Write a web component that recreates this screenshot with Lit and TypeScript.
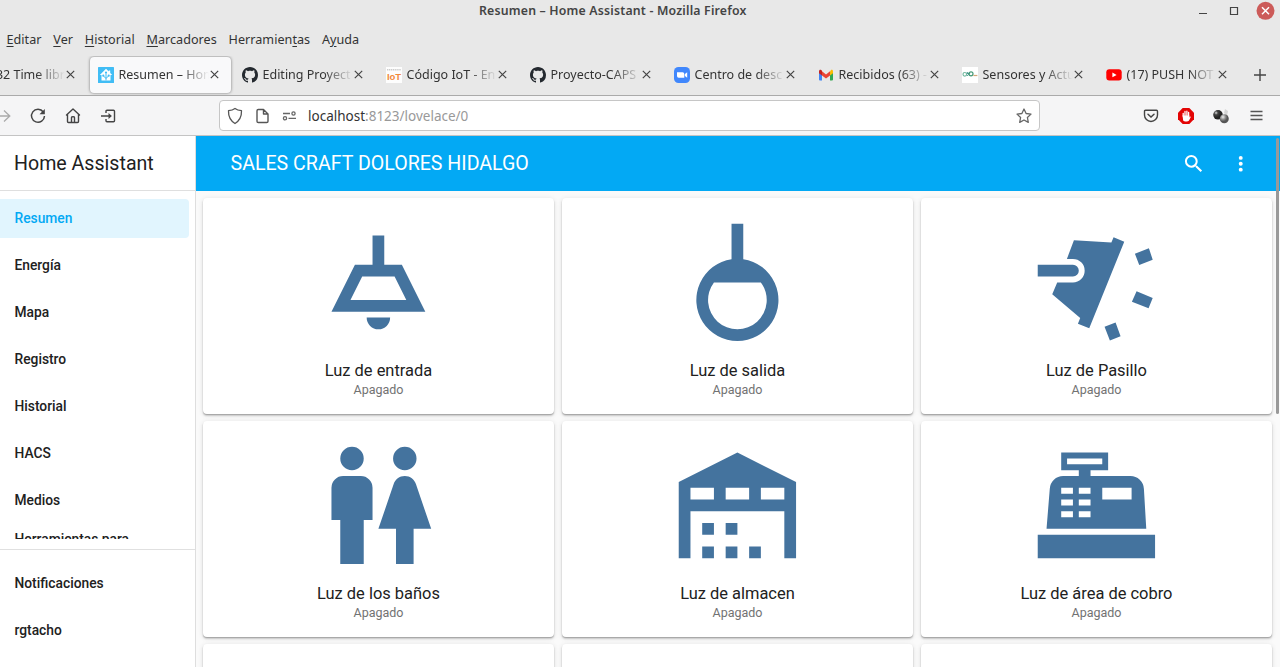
import { LitElement, html, css, svg } from "lit";
import { customElement } from "lit/decorators.js";
import { classMap } from "lit/directives/class-map.js";

const githubIcon = svg`<svg viewBox="0 0 16 16" width="16" height="16"><path fill="#24292f" d="M8 0C3.58 0 0 3.58 0 8c0 3.54 2.29 6.53 5.47 7.59.4.07.55-.17.55-.38 0-.19-.01-.82-.01-1.49-2.01.37-2.53-.49-2.69-.94-.09-.23-.48-.94-.82-1.13-.28-.15-.68-.52-.01-.53.63-.01 1.08.58 1.23.82.72 1.21 1.87.87 2.33.66.07-.52.28-.87.51-1.07-1.78-.2-3.64-.89-3.64-3.95 0-.87.31-1.59.82-2.15-.08-.2-.36-1.02.08-2.12 0 0 .67-.21 2.2.82.64-.18 1.32-.27 2-.27s1.36.09 2 .27c1.53-1.04 2.2-.82 2.2-.82.44 1.1.16 1.92.08 2.12.51.56.82 1.27.82 2.15 0 3.07-1.87 3.75-3.65 3.95.29.25.54.73.54 1.48 0 1.07-.01 1.93-.01 2.2 0 .21.15.46.55.38A8.01 8.01 0 0 0 16 8c0-4.42-3.58-8-8-8z"/></svg>`;

const homeAssistantIcon = svg`<svg viewBox="0 0 16 16" width="16" height="16"><rect width="16" height="16" rx=".6" fill="#41bdf5"/><path fill="#fff" d="M8 1.8 1.8 8h1.7v5.4h9V8h1.7l-2-2V3.6h-1.4v1Z"/><path d="M8 13.4V6.2M8 11.4 5.3 8.9M8 11.4l2.7-2.5" stroke="#41bdf5" fill="none"/><g fill="#41bdf5"><circle cx="8" cy="5.5" r="1.1"/><circle cx="5.3" cy="8.7" r="1.1"/><circle cx="10.7" cy="8.7" r="1.1"/></g></svg>`;

const iotIcon = svg`<svg viewBox="0 0 16 16" width="16" height="16"><rect width="16" height="16" fill="#fdfdfd"/><path d="M1 2.7h14" stroke="#ccc" stroke-width="1.6" stroke-dasharray="1.3 .6"/><text x="1" y="13.2" font-family="Liberation Sans" font-size="9.5" font-weight="700" fill="#f28a3c" textLength="14">IoT</text></svg>`;

const zoomIcon = svg`<svg viewBox="0 0 16 16" width="16" height="16"><rect width="16" height="16" rx="4.5" fill="#4087fc"/><path fill="#fff" d="M3 5.2h5.6a1.7 1.7 0 0 1 1.7 1.7v3.9H4.7A1.7 1.7 0 0 1 3 9.1ZM10.9 7l2.3-1.7v5.4L10.9 9Z"/></svg>`;

const gmailIcon = svg`<svg viewBox="0 0 16 16" width="16" height="16"><path fill="#4285f4" d="M1 4h3v9.5H2a1 1 0 0 1-1-1Z"/><path fill="#34a853" d="M12 6h3v6.5a1 1 0 0 1-1 1h-2Z"/><path fill="#fbbc04" d="M12 4.5 13 3c1-.6 2 .1 2 1.2v2L12 8.500Z"/><path fill="#ea4335" d="M4 4.3 8 7.400l4-3.100v4.200L8 11.500 4 8.500Z"/><path fill="#c5221f" d="M1 4.200C1 3 2.200 2.300 3.200 3L4 3.700v4.800L1 6.200Z"/></svg>`;

const sensorIcon = svg`<svg viewBox="0 0 16 16" width="16" height="16"><rect width="16" height="16" fill="#fff"/><g fill="none" stroke-width="1.200"><circle cx="2.800" cy="7.300" r="1.800" stroke="#73b9a0"/><path d="M5 5.500 8 8.500M8 5.500 5 8.500" stroke="#328a83"/><circle cx="9" cy="6.800" r="2" stroke="#479a77"/><path d="M11.400 8.500h4" stroke="#d2a779"/></g></svg>`;

const youtubeIcon = svg`<svg viewBox="0 0 16 16" width="16" height="16"><rect x=".3" y="2.300" width="15.400" height="11.200" rx="3" fill="#f00"/><path fill="#fff" d="m6.400 5.500 4.200 2.400-4.200 2.400Z"/></svg>`;

interface Tab { title: string; icon?: unknown; active?: boolean; }
const TABS: Tab[] = [
  { title: "ESP32 Time libr" },
  { title: "Resumen – Hom", icon: homeAssistantIcon, active: true },
  { title: "Editing Proyect", icon: githubIcon },
  { title: "Código IoT - En", icon: iotIcon },
  { title: "Proyecto-CAPS", icon: githubIcon },
  { title: "Centro de desc", icon: zoomIcon },
  { title: "Recibidos (63) -", icon: gmailIcon },
  { title: "Sensores y Actu", icon: sensorIcon },
  { title: "(17) PUSH NOT", icon: youtubeIcon },
];

interface Light { name: string; path: string; }
const LIGHTS: Light[] = [
  { name: "Luz de entrada", path: "M8 9H11V4H13V9H16L20 17H4ZM14 18A2 2 0 0 1 10 18ZM9.240 11 7.240 15H16.760L14.760 11Z" },
  { name: "Luz de salida", path: "M11 2V8.070A7 7 0 1 0 13 8.070V2ZM8 12H16A5 5 0 1 1 8 12Z" },
  { name: "Luz de Pasillo", path: "M2 9H8A1 1 0 0 1 8 11H2ZM8.170 4.830 14.550 5.200 14.930 4.300 16.750 5.060 10.780 19.800 8.850 19.030 9.240 18.070 4.470 14.030 5.320 12H8A2 2 0 0 0 8 8H6.970ZM18.560 7.100 20.950 6.200 21.600 8.130 19.300 9.030ZM18.850 13.520 21.600 14.660 20.890 16.420 18.050 15.300ZM13.390 19.550 15.270 18.820 16.120 21.200 14.300 21.900Z" },
  { name: "Luz de los baños", path: "M7.500 2A2 2 0 0 1 7.500 6A2 2 0 0 1 7.500 2M6 7H9A2 2 0 0 1 11 9V14.500H9.500V22H5.500V14.500H4V9A2 2 0 0 1 6 7M16.500 2A2 2 0 0 1 16.500 6A2 2 0 0 1 16.500 2M15 22V16H12L14.590 8.410C14.840 7.590 15.600 7 16.500 7S18.160 7.590 18.410 8.410L21 16H18V22Z" },
  { name: "Luz de almacen", path: "M2 8 12 3 22 8V21H20V13H4V21H2ZM4 9V11H8V9ZM10 9V11H14V9ZM16 9V11H20V9ZM6 15H8V17H6ZM10 15H12V17H10ZM6 19H8V21H6ZM10 19H12V21H10ZM14 19H16V21H14Z" },
  { name: "Luz de área de cobro", path: "M2 17H22V21H2ZM6 3H14V6H11V7H17.800A2.300 2.300 0 0 1 20.100 9.200L20.500 16H3.500L4.050 9.200A2.300 2.300 0 0 1 6.350 7H9V6H6ZM7 4V5H13V4ZM6 9V10H8V9ZM9 9V10H11V9ZM6 11V12H8V11ZM9 11V12H11V11ZM6 13V14H8V13ZM9 13V14H11V13ZM13 9V11H18V9Z" },
];

@customElement("browser-chrome")
class BrowserChrome extends LitElement {
  static styles = css`
    :host { display: block; height: 136px; box-sizing: border-box; background: #e8e8e8; color: #333; font: 12.500px/20px "Noto Sans", "Open Sans", sans-serif; border-bottom: 1px solid #c4c4c4; }
    * { box-sizing: border-box; }
    svg { display: block; flex: none; }
    .titlebar { height: 24px; display: grid; grid-template-columns: 479px 1fr auto; align-items: center; padding-bottom: 2px; }
    .title { padding-top: .5px; font-size: 12.300px; font-weight: 600; letter-spacing: .19px; color: #444; }
    .menu { display: flex; height: 32px; align-items: center; gap: 11.800px; padding: 0 0 1px 6.500px; font-size: 12.600px; letter-spacing: .03px; }
    .menu u { text-decoration-thickness: 1px; text-underline-offset: 2px; }
    .tabs { display: flex; height: 39px; align-items: center; padding-bottom: 2px; overflow: hidden; }
    .tab { flex: none; width: 141px; height: 36px; margin: 0 1px 0 2px; display: flex; align-items: center; gap: 5px; padding: 0 9px 0 8px; border-radius: 4px; }
    .tab:first-child { margin-left: -54.500px; }
    .tab.active { background: #f9f9fa; box-shadow: 0 0 3px rgba(0,0,0,.5); }
    .label { flex: 1; margin-right: -4px; overflow: hidden; white-space: nowrap; -webkit-mask-image: linear-gradient(to right, #000 68%, transparent); mask-image: linear-gradient(to right, #000 68%, transparent); }
    .close { margin-right: 3px; }
    .add { margin-left: 14.500px; }
    .toolbar { height: 40px; background: #f5f5f6; border-top: 1px solid #aaa; display: flex; align-items: center; }
    .nav { flex: none; width: 218px; display: flex; align-items: center; gap: 18px; margin-left: -6px; }
    .address { width: 821px; height: 31px; margin-left: 7px; background: #fff; border: 1px solid #c6c6c6; border-radius: 4px; display: flex; align-items: center; padding: 0 7px; font-size: 13.500px; color: #999; }
    .icons { display: flex; gap: 11px; margin-right: 11px; }
    .url { flex: 1; }
    .url b { font-weight: 400; color: #333; }
    .actions { display: flex; align-items: center; gap: 19px; margin-left: 103px; }
    .hamburger { margin-left: 2px; }
  `;

  render() {
    const close = svg`<svg class="close" width="9" height="9" viewBox="0 0 9 9"><path d="m.8.8 7.400 7.400m0-7.400-7.400 7.400" stroke="#444" stroke-width="1.200"/></svg>`;
    return html`
      <div class="titlebar"><span></span><span class="title">Resumen – Home Assistant - Mozilla Firefox</span>
        <svg width="84" height="22" viewBox="1196 0 84 22"><path d="M1199 13.500h8" stroke="#444"/><path d="M1230.500 7.500h7v7h-7Z" fill="none" stroke="#444" stroke-width="1.200"/><circle cx="1265.500" cy="10.800" r="9" fill="#cc5b59"/><path d="m1262 7.300 7 7m0-7-7 7" stroke="#fff" stroke-width="1.500"/></svg></div>
      <div class="menu"><span><u>E</u>ditar</span><span><u>V</u>er</span><span><u>H</u>istorial</span><span><u>M</u>arcadores</span><span>Herramien<u>t</u>as</span><span>A<u>y</u>uda</span></div>
      <div class="tabs">
        ${TABS.map(t => html`<div class=${classMap({ tab: true, active: !!t.active })}>${t.icon ?? svg`<svg width="16" height="16"></svg>`}<span class="label">${t.title}</span>${close}</div>`)}
        <svg class="add" width="12" height="12" viewBox="0 0 12 12"><path d="M6 0v12M0 6h12" stroke="#444" stroke-width="1.400"/></svg>
      </div>
      <div class="toolbar">
        <div class="nav">
          <svg width="17" height="16" viewBox="0 0 17 16"><path d="M1 8h15M10 2.500 15.800 8 10 13.500" fill="none" stroke="#aaa" stroke-width="1.300"/></svg>
          <svg width="18" height="18" viewBox="0 0 18 18"><path d="M14.300 5A6.500 6.500 0 1 0 15.500 9" fill="none" stroke="#444" stroke-width="1.500"/><path d="M15.800 2v5.300h-5.300Z" fill="#444"/></svg>
          <svg width="17" height="17" viewBox="0 0 17 17"><path d="m1.500 8 6.500-6 6.500 6M2.500 7.500v7c0 .6.400 1 1 1h9c.6 0 1-.4 1-1v-7M6.500 15v-4.500c0-1 3-1 3 0V15" fill="none" stroke="#444" stroke-width="1.400" stroke-linejoin="round" stroke-linecap="round"/></svg>
          <svg width="17" height="16" viewBox="0 0 17 16"><path d="M6 5V3.300c0-.6.400-1 1-1h6.500c.6 0 1 .4 1 1v9.400c0 .6-.4 1-1 1H7c-.6 0-1-.4-1-1V11" fill="none" stroke="#444" stroke-width="1.400"/><path d="M1 8h9" stroke="#444" stroke-width="1.500"/><path d="m8.500 5 3.400 3-3.400 3Z" fill="#444"/></svg>
        </div>
        <div class="address">
          <div class="icons">
            <svg width="17" height="18" viewBox="0 0 17 18"><path d="M8 1.500c2 1.500 4.300 2 6.500 2.200.2 5.500-1.800 9.800-6.500 12.800C3.300 13.500 1.300 9.200 1.500 3.700c2.200-.2 4.500-.7 6.500-2.200Z" fill="none" stroke="#555" stroke-width="1.300" stroke-linejoin="round"/></svg>
            <svg width="15" height="18" viewBox="0 0 15 18"><path d="M2 3.800C2 3 2.500 2.500 3.300 2.500H8.500L13 7v7.200c0 .8-.5 1.300-1.300 1.300H3.300c-.8 0-1.300-.5-1.300-1.300ZM8.500 2.500V7H13" fill="none" stroke="#555" stroke-width="1.400" stroke-linejoin="round"/></svg>
            <svg width="16" height="18" viewBox="0 0 16 18"><path d="M2 6.500h7M7.500 11.300H15" stroke="#666" stroke-width="1.300"/><g fill="none" stroke="#666" stroke-width="1.300"><circle cx="12.500" cy="6.500" r="1.600"/><circle cx="4" cy="11.300" r="1.600"/></g></svg>
          </div>
          <span class="url"><b>localhost</b>:8123/lovelace/0</span>
          <svg width="16" height="16" viewBox="0 0 16 16"><path d="m8 1 2.100 4.500 4.900.6-3.600 3.400.9 4.900L8 12l-4.300 2.400.9-4.900L1 6.100l4.900-.6Z" fill="none" stroke="#666" stroke-width="1.300" stroke-linejoin="round"/></svg>
        </div>
        <div class="actions">
          <svg width="16" height="14" viewBox="0 0 16 14"><path d="M2.500 1.200h11c.6 0 1 .5 1 1.300V6a6.500 6.500 0 0 1-13 0V2.500c0-.8.400-1.300 1-1.300Z" fill="none" stroke="#444" stroke-width="1.400"/><path d="m5 5.300 3 2.700 3-2.700" fill="none" stroke="#444" stroke-width="1.500" stroke-linecap="round"/></svg>
          <svg width="16" height="16" viewBox="0 0 16 16"><path d="M4.700 0h6.600L16 4.700v6.600L11.300 16H4.700L0 11.300V4.700Z" fill="#e30505"/><path d="M5.200 8V5.300M7 8V3.500M8.900 8V3.200M10.600 9V4.500" stroke="#fff" stroke-width="1.300" stroke-linecap="round"/><path d="M4.500 7.500h6.900v2l.6-.8c.5-.3.900.1.700.6L11 12.500c-1 1.400-4.800 1.400-5.800 0Z" fill="#fff"/></svg>
          <svg width="16" height="16" viewBox="0 0 16 16"><defs><radialGradient id="dark" cx=".3" cy=".3"><stop stop-color="#ddd"/><stop offset=".4" stop-color="#444"/><stop offset="1" stop-color="#222"/></radialGradient><radialGradient id="light" cx=".35" cy=".3"><stop stop-color="#eee"/><stop offset=".6" stop-color="#888"/><stop offset="1" stop-color="#555"/></radialGradient></defs><path d="m11 5 1-4 3 2-1 5Z" fill="#d5d5d5"/><circle cx="5" cy="6.800" r="4.800" fill="url(#dark)"/><circle cx="11.300" cy="10.800" r="4.500" fill="url(#light)"/></svg>
          <svg class="hamburger" width="13" height="12" viewBox="0 0 13 12"><path d="M.5 1.500h12m-12 4h12M.5 9.500h12" stroke="#555" stroke-width="1.400"/></svg>
        </div>
      </div>`;
  }
}

@customElement("light-card")
class LightCard extends LitElement {
  static properties = { name: {}, path: {} };
  declare name: string;
  declare path: string;
  static styles = css`
    :host { display: flex; flex-direction: column; align-items: center; height: 216px; box-sizing: border-box; padding-top: 14.300px; background: #fff; border-radius: 4px; box-shadow: 0 2px 2px rgba(0,0,0,.14), 0 1px 5px rgba(0,0,0,.12), 0 1px 1px rgba(0,0,0,.18); }
    .icon { display: block; flex: none; width: 140.800px; height: 140.800px; margin-left: .2px; fill: #44739e; }
    .name { margin-top: 6.900px; font-size: 16.450px; line-height: 22px; color: #212121; white-space: nowrap; }
    .state { margin-top: -1px; font-size: 12.500px; line-height: 18px; color: #727272; }
  `;
  render() {
    return html`<svg class="icon" viewBox="0 0 24 24"><path fill-rule="evenodd" d=${this.path}></path></svg>
      ${this.name ? html`<div class="name">${this.name}</div><div class="state">Apagado</div>` : ""}`;
  }
}

@customElement("side-menu")
class SideMenu extends LitElement {
  static styles = css`
    :host { display: flex; flex-direction: column; width: 196px; box-sizing: border-box; background: #fff; border-right: 1px solid #dedede; color: #212121; font-weight: 500; }
    .brand { flex: none; height: 55px; box-sizing: border-box; border-bottom: 1px solid #dfdfdf; padding-left: 14px; font-size: 19.600px; line-height: 55px; font-weight: 400; }
    .list { height: 348px; overflow: hidden; padding-top: 7.500px; box-sizing: border-box; }
    .item { height: 39px; margin: 0 6px 8px 0; padding-left: 14.500px; font-size: 13.800px; line-height: 39.500px; border-radius: 0 4px 4px 0; }
    .item.selected { background: #e1f5fe; color: #03a9f4; }
    .item.wrapped { line-height: 19px; padding-top: 2.500px; }
    .footer { margin-top: 10px; border-top: 1px solid #e0e0e0; padding-top: 14px; }
  `;
  render() {
    return html`<div class="brand">Home Assistant</div>
      <div class="list">
        ${["Resumen", "Energía", "Mapa", "Registro", "Historial", "HACS", "Medios"].map((x, i) => html`<div class=${classMap({ item: true, selected: i === 0 })}>${x}</div>`)}
        <div class="item wrapped">Herramientas para</div>
      </div>
      <div class="footer"><div class="item">Notificaciones</div><div class="item">rgtacho</div></div>`;
  }
}

@customElement("app-root")
class AppRoot extends LitElement {
  static styles = css`
    :host { display: block; position: relative; width: 1280px; height: 667px; overflow: hidden; background: #fafafa; font-family: Roboto, sans-serif; }
    .body { display: grid; grid-template-columns: 196px 1fr; height: 531px; }
    .header { height: 55px; box-sizing: border-box; background: #03a9f4; color: #fff; display: flex; align-items: center; padding: 0 28px 0 34.500px; }
    .heading { flex: 1; font-size: 19.600px; }
    .search { margin-right: 23.500px; }
    .header svg { display: block; fill: #fff; }
    .cards { display: grid; grid-template-columns: repeat(3, 351px); gap: 7px 8px; padding: 7px; }
    .scrollbar { position: absolute; right: 1px; top: 138px; width: 3px; height: 276px; border-radius: 2px; background: #999; }
  `;
  render() {
    return html`<browser-chrome></browser-chrome>
      <div class="body">
        <side-menu></side-menu>
        <main>
          <div class="header"><span class="heading">SALES CRAFT DOLORES HIDALGO</span>
            <svg class="search" width="23.5" height="23.5" viewBox="0 0 24 24"><path d="M9.500 3A6.500 6.500 0 0 1 16 9.500c0 1.610-.59 3.090-1.560 4.230l.27.270h.790l5 5-1.500 1.500-5-5v-.790l-.270-.270A6.516 6.516 0 0 1 9.500 16a6.500 6.500 0 0 1 0-13m0 2C7 5 5 7 5 9.500S7 14 9.500 14 14 12 14 9.500 12 5 9.500 5Z"/></svg>
            <svg width="23.5" height="23.5" viewBox="0 0 24 24"><circle cx="12" cy="6" r="2"/><circle cx="12" cy="12" r="2"/><circle cx="12" cy="18" r="2"/></svg>
          </div>
          <div class="cards">
            ${LIGHTS.map(l => html`<light-card .name=${l.name} .path=${l.path}></light-card>`)}
            ${[0, 1, 2].map(() => html`<light-card .name=${""} .path=${""}></light-card>`)}
          </div>
        </main>
      </div>
      <div class="scrollbar"></div>`;
  }
}
